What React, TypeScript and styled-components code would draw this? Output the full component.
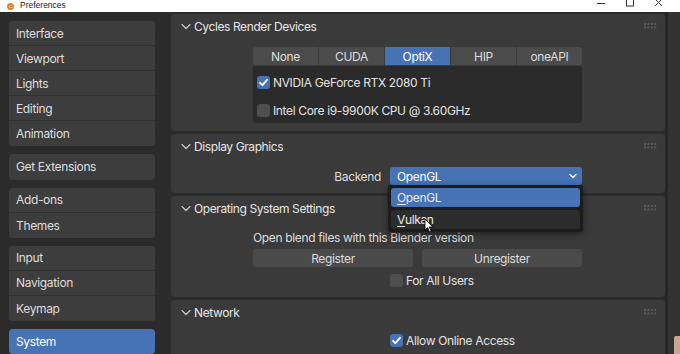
import React from "react";
import styled, { createGlobalStyle } from "styled-components";

const Global = createGlobalStyle`
  html, body { margin: 0; padding: 0; background: #2b2b2b; }
  body { font-family: Inter, "Noto Sans", sans-serif; -webkit-font-smoothing: antialiased; letter-spacing: -0.35px; }
  * { box-sizing: border-box; }
`;

const Window = styled.div`
  width: 680px;
  height: 354px;
  display: flex;
  flex-direction: column;
  overflow: hidden;
  background: #2b2b2b;
`;

const TitleBar = styled.div`
  height: 12px;
  flex-shrink: 0;
  background: #ffffff;
  display: flex;
  align-items: center;
  padding-left: 5px;
  color: #1e1e1e;
  font-family: "Liberation Sans", sans-serif;
  font-size: 8.5px;
  letter-spacing: 0;
  overflow: hidden;
`;

const TitleText = styled.span`
  margin-left: 5px;
  margin-top: -2px;
`;

const Controls = styled.div`
  margin-left: auto;
  margin-right: 7px;
  display: flex;
  height: 12px;
`;

const ControlButton = styled.div`
  width: 29px;
  display: flex;
  align-items: flex-start;
  justify-content: center;
`;

const Body = styled.div`
  flex: 1;
  min-height: 0;
  display: flex;
`;

const Sidebar = styled.div`
  width: 171px;
  flex-shrink: 0;
  padding: 9px 16px 0 9px;
  display: flex;
  flex-direction: column;
  gap: 8px;
`;

const NavGroup = styled.div`
  border-radius: 4px;
  overflow: hidden;
  display: flex;
  flex-direction: column;
  background: #3d3d3d;
`;

const NavItem = styled.div<{ $active?: boolean }>`
  height: 25.2px;
  display: flex;
  align-items: center;
  padding-left: 7px;
  font-size: 12px;
  color: ${(p) => (p.$active ? "#ffffff" : "#dedede")};
  background: ${(p) => (p.$active ? "#4772b3" : "#3d3d3d")};
  border-bottom: 1px solid #303030;
  &:last-child { border-bottom: none; }
`;

const Main = styled.div`
  flex: 1;
  min-width: 0;
  padding-top: 2px;
  display: flex;
  flex-direction: column;
  gap: 3px;
`;

const Panel = styled.div`
  flex-shrink: 0;
  background: #3a3a3a;
  border-radius: 4px;
  display: flex;
  flex-direction: column;
`;

const PanelHeader = styled.div`
  height: 24px;
  display: flex;
  align-items: center;
  padding-left: 10px;
  padding-right: 8px;
  font-size: 12px;
  letter-spacing: -0.4px;
  color: #e6e6e6;
`;

const HeaderTitle = styled.span`
  margin-left: 3px;
`;

const Grip = styled.svg`
  margin-left: auto;
`;

const PanelContent = styled.div<{ $pt: number; $pb: number }>`
  padding: ${(p) => p.$pt}px 83px ${(p) => p.$pb}px 82px;
  display: flex;
  flex-direction: column;
`;

const Tabs = styled.div`
  display: flex;
  height: 18px;
  border-radius: 3px;
  overflow: hidden;
  gap: 1px;
  background: #3a3a3a;
`;

const Tab = styled.div<{ $active?: boolean }>`
  flex: 1;
  display: flex;
  align-items: center;
  justify-content: center;
  font-size: 12px;
  color: ${(p) => (p.$active ? "#ffffff" : "#dcdcdc")};
  background: ${(p) => (p.$active ? "#4772b3" : "#4b4b4b")};
`;

const DeviceBox = styled.div`
  margin-top: 1px;
  height: 57px;
  background: #2a2a2a;
  border-radius: 3px;
  padding: 7px 4px 0 4px;
  display: flex;
  flex-direction: column;
  gap: 10px;
`;

const CheckRow = styled.div`
  height: 18px;
  display: flex;
  align-items: center;
  gap: 3px;
  font-size: 12px;
  color: #e2e2e2;
`;

const Box = styled.div<{ $checked?: boolean }>`
  width: 13px;
  height: 13px;
  border-radius: 3px;
  background: ${(p) => (p.$checked ? "#4772b3" : "#4e4e4e")};
  display: flex;
  align-items: center;
  justify-content: center;
  flex-shrink: 0;
`;

const PropGrid = styled.div<{ $mt?: number }>`
  margin-top: ${(p) => p.$mt ?? 0}px;
  display: grid;
  grid-template-columns: 128px 192px;
  column-gap: 9px;
  align-items: center;
`;

const PropLabel = styled.div`
  text-align: right;
  font-size: 12px;
  color: #dcdcdc;
`;

const SelectWrap = styled.div`
  position: relative;
  height: 18px;
`;

const SelectBox = styled.div`
  height: 18px;
  border-radius: 3px;
  background: #4772b3;
  display: flex;
  align-items: center;
  padding: 0 5px 0 7px;
  font-size: 12px;
  color: #ffffff;
  justify-content: space-between;
`;

const Menu = styled.div`
  position: absolute;
  left: -2px;
  top: 18px;
  width: 195px;
  height: 47px;
  background: #1b1b1b;
  border-radius: 3px;
  padding: 3px;
  display: flex;
  flex-direction: column;
  gap: 3px;
  z-index: 5;
  box-shadow: 0 2px 6px rgba(0, 0, 0, 0.45);
`;

const MenuItem = styled.div<{ $active?: boolean }>`
  height: 19px;
  border-radius: 3px;
  background: ${(p) => (p.$active ? "#4772b3" : "#2c2c2c")};
  display: flex;
  align-items: center;
  padding-left: 6px;
  font-size: 12px;
  color: #eaeaea;
`;

const U = styled.span`
  text-decoration: underline;
  text-underline-offset: 2px;
`;

const Cursor = styled.svg`
  position: absolute;
  left: 36px;
  top: 33px;
`;

const InfoText = styled.div`
  height: 18px;
  display: flex;
  align-items: center;
  font-size: 12px;
  color: #dcdcdc;
`;

const ButtonRow = styled.div`
  margin-top: 3px;
  display: grid;
  grid-template-columns: 1fr 1fr;
  column-gap: 9px;
`;

const Button = styled.div`
  height: 18px;
  border-radius: 3px;
  background: #4a4a4a;
  display: flex;
  align-items: center;
  justify-content: center;
  font-size: 12px;
  color: #dcdcdc;
`;

const ScrollStrip = styled.div`
  width: 15px;
  flex-shrink: 0;
  border-left: 3px solid #262626;
  background: #323232;
  display: flex;
  flex-direction: column;
  justify-content: flex-end;
  align-items: flex-end;
`;

const Corner = styled.div`
  width: 6px;
  height: 18px;
  background: #c8a890;
  border-radius: 2px 0 0 0;
`;

const Chevron = () => (
  <svg width="10" height="7" viewBox="0 0 10 7">
    <path d="M1 1.5 L5 5.5 L9 1.5" fill="none" stroke="#cfcfcf" strokeWidth="1.1" strokeLinecap="round" strokeLinejoin="round" />
  </svg>
);

const GripIcon = () => (
  <Grip width="13" height="6" viewBox="0 0 13 6">
    {[0, 1, 2, 3].map((c) =>
      [0, 1].map((r) => <rect key={`${c}-${r}`} x={c * 3.4} y={r * 3.4} width="2" height="2" fill="#5c5c5c" />)
    )}
  </Grip>
);

const Check = () => (
  <svg width="11" height="11" viewBox="0 0 11 11">
    <path d="M2 5.8 L4.4 8.2 L9 2.8" fill="none" stroke="#ffffff" strokeWidth="1.8" strokeLinecap="round" strokeLinejoin="round" />
  </svg>
);

const Header = ({ title }: { title: string }) => (
  <PanelHeader>
    <Chevron />
    <HeaderTitle>{title}</HeaderTitle>
    <GripIcon />
  </PanelHeader>
);

export default function App() {
  return (
    <>
      <Global />
      <Window>
        <TitleBar>
          <svg width="10" height="9" viewBox="0 0 10 9">
            <circle cx="5.5" cy="4.5" r="3.5" fill="#e87d0d" />
            <circle cx="5.8" cy="4.5" r="1.6" fill="#ffffff" />
            <circle cx="5.8" cy="4.5" r="0.9" fill="#265787" />
          </svg>
          <TitleText>Preferences</TitleText>
          <Controls>
            <ControlButton>
              <svg width="10" height="8"><path d="M1 3.5 H9" stroke="#333" strokeWidth="1" /></svg>
            </ControlButton>
            <ControlButton>
              <svg width="10" height="8"><rect x="1.5" y="-2" width="7" height="8" fill="none" stroke="#333" strokeWidth="1" /></svg>
            </ControlButton>
            <ControlButton>
              <svg width="10" height="8"><path d="M1 -1 L8 6 M8 -1 L1 6" stroke="#333" strokeWidth="1" /></svg>
            </ControlButton>
          </Controls>
        </TitleBar>
        <Body>
          <Sidebar>
            <NavGroup>
              <NavItem>Interface</NavItem>
              <NavItem>Viewport</NavItem>
              <NavItem>Lights</NavItem>
              <NavItem>Editing</NavItem>
              <NavItem>Animation</NavItem>
            </NavGroup>
            <NavGroup>
              <NavItem>Get Extensions</NavItem>
            </NavGroup>
            <NavGroup>
              <NavItem>Add-ons</NavItem>
              <NavItem>Themes</NavItem>
            </NavGroup>
            <NavGroup>
              <NavItem>Input</NavItem>
              <NavItem>Navigation</NavItem>
              <NavItem>Keymap</NavItem>
            </NavGroup>
            <NavGroup>
              <NavItem $active>System</NavItem>
            </NavGroup>
          </Sidebar>
          <Main>
            <Panel>
              <Header title="Cycles Render Devices" />
              <PanelContent $pt={9} $pb={8}>
                <Tabs>
                  <Tab>None</Tab>
                  <Tab>CUDA</Tab>
                  <Tab $active>OptiX</Tab>
                  <Tab>HIP</Tab>
                  <Tab>oneAPI</Tab>
                </Tabs>
                <DeviceBox>
                  <CheckRow>
                    <Box $checked><Check /></Box>
                    NVIDIA GeForce RTX 2080 Ti
                  </CheckRow>
                  <CheckRow>
                    <Box />
                    Intel Core i9-9900K CPU @ 3.60GHz
                  </CheckRow>
                </DeviceBox>
              </PanelContent>
            </Panel>
            <Panel>
              <Header title="Display Graphics" />
              <PanelContent $pt={9} $pb={8}>
                <PropGrid>
                  <PropLabel>Backend</PropLabel>
                  <SelectWrap>
                    <SelectBox>
                      OpenGL
                      <svg width="8" height="6" viewBox="0 0 8 6">
                        <path d="M1 1.5 L4 4.5 L7 1.5" fill="none" stroke="#ffffff" strokeWidth="1.3" strokeLinecap="round" strokeLinejoin="round" />
                      </svg>
                    </SelectBox>
                    <Menu>
                      <MenuItem $active><U>O</U>penGL</MenuItem>
                      <MenuItem><U>V</U>ulkan</MenuItem>
                      <Cursor width="10" height="15" viewBox="0 0 10 15">
                        <path d="M1 1 L1 12 L3.6 9.6 L5.6 14 L7.2 13.3 L5.3 9 L8.8 9 Z" fill="#ffffff" stroke="#000" strokeWidth="0.8" strokeLinejoin="round" />
                      </Cursor>
                    </Menu>
                  </SelectWrap>
                </PropGrid>
              </PanelContent>
            </Panel>
            <Panel>
              <Header title="Operating System Settings" />
              <PanelContent $pt={8} $pb={8}>
                <InfoText>Open blend files with this Blender version</InfoText>
                <ButtonRow>
                  <Button>Register</Button>
                  <Button>Unregister</Button>
                </ButtonRow>
                <PropGrid $mt={4}>
                  <div />
                  <CheckRow>
                    <Box />
                    For All Users
                  </CheckRow>
                </PropGrid>
              </PanelContent>
            </Panel>
            <Panel>
              <Header title="Network" />
              <PanelContent $pt={7} $pb={8}>
                <PropGrid>
                  <div />
                  <CheckRow>
                    <Box $checked><Check /></Box>
                    Allow Online Access
                  </CheckRow>
                </PropGrid>
              </PanelContent>
            </Panel>
          </Main>
          <ScrollStrip>
            <Corner />
          </ScrollStrip>
        </Body>
      </Window>
    </>
  );
}
